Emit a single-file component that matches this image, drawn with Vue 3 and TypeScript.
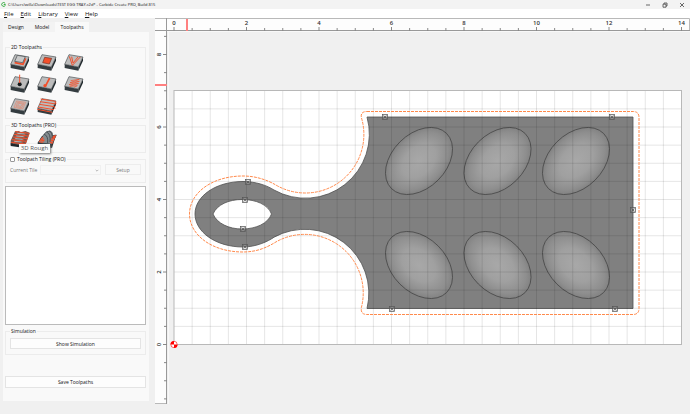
<script setup lang="ts">
import { ref } from 'vue'

const UNIT = 36.25
const ORIGIN_X = 174
const ORIGIN_Y = 344.5

const menus: [string, string][] = [['F', 'ile'], ['E', 'dit'], ['L', 'ibrary'], ['V', 'iew'], ['H', 'elp']]
const tabs = ['Design', 'Model', 'Toolpaths']
const activeTab = ref('Toolpaths')
const tiling = ref(false)

const tools2d = ['Contour', 'Pocket', 'VCarve', 'Drill', 'Engrave', 'Texture', 'Inlay', 'Facing']

const seq = (from: number, to: number) => Array.from({ length: to - from + 1 }, (_, i) => from + i)
const xOf = (halfUnits: number) => ORIGIN_X + (halfUnits * UNIT) / 2
const yOf = (halfUnits: number) => ORIGIN_Y - (halfUnits * UNIT) / 2

const xTicks = seq(0, 28)
const yTicks = seq(-3, 17)
const gridX = seq(1, 27)
const gridY = seq(1, 13)
const xLabels = seq(0, 7).map((n) => n * 2)
const yLabels = seq(0, 4).map((n) => n * 2)

const eggs = [
  { x: 419, y: 161, turn: -45 },
  { x: 497.5, y: 161, turn: -45 },
  { x: 576, y: 161, turn: -45 },
  { x: 419, y: 265, turn: 45 },
  { x: 497.5, y: 265, turn: 45 },
  { x: 576, y: 265, turn: 45 },
]

const tabMarks = [
  [385, 117], [612, 117], [633, 210], [392, 309], [615, 309],
  [248, 182], [245, 200], [243, 229], [245, 247],
]
</script>

<template>
  <div class="app">
    <header class="titlebar">
      <svg class="logo" viewBox="0 0 12 12" aria-hidden="true">
        <path d="M10 3.2A4.6 4.6 0 1 0 10.4 8V6H6.5" fill="none" stroke="#3fae49" stroke-width="2.4" />
      </svg>
      <span class="title">C:\Users\willa\Downloads\TEST EGG TRAY.c2d* - Carbide Create PRO, Build 815</span>
      <div class="controls">
        <button type="button" aria-label="Minimize">
          <svg viewBox="0 0 6 6"><path d="M1 3H5" /></svg>
        </button>
        <button type="button" aria-label="Restore">
          <svg viewBox="0 0 6 6"><path d="M1 2.2H4V5.2H1ZM2 2V1H5V4H4" /></svg>
        </button>
        <button type="button" aria-label="Close">
          <svg viewBox="0 0 6 6"><path d="M1 1L5 5M5 1L1 5" /></svg>
        </button>
      </div>
    </header>

    <nav class="menubar">
      <button v-for="m in menus" :key="m[0]" type="button"><u>{{ m[0] }}</u>{{ m[1] }}</button>
    </nav>

    <main class="body">
      <aside class="side">
        <div class="tabs" role="tablist">
          <button
            v-for="t in tabs"
            :key="t"
            type="button"
            role="tab"
            :class="{ active: t === activeTab }"
            :aria-selected="t === activeTab"
            @click="activeTab = t"
          >{{ t }}</button>
        </div>

        <div class="pane">
          <fieldset class="group flat">
            <legend>2D Toolpaths</legend>
            <div class="tools">
              <button v-for="name in tools2d" :key="name" type="button" :aria-label="name">
                <svg viewBox="0 0 60 54">
                  <path d="M2 31L43 39V50L2 42Z" fill="#343c40" />
                  <path d="M43 39L57 9V20L43 50Z" fill="#20282c" />
                  <path d="M15 2L57 9L43 39L2 31Z" fill="#bcbcbc" stroke="#454b4e" stroke-width="2" />
                  <g v-if="name === 'Contour'">
                    <path d="M14 26L39 31L47 13" fill="none" stroke="#f2502c" stroke-width="5" />
                    <path d="M22 4L46 8L38 26L14 22Z" fill="#c9c9c9" stroke="#40474a" stroke-width="2" />
                  </g>
                  <path v-else-if="name === 'Pocket'" d="M23 10L44 13L37 30L17 26Z" fill="#f2502c" stroke="#6b3328" stroke-width="2" />
                  <path v-else-if="name === 'VCarve'" d="M16 7L25 34L49 9M23 8L27 27L42 9" fill="none" stroke="#f2502c" stroke-width="3" />
                  <g v-else-if="name === 'Drill'">
                    <circle cx="29" cy="25" r="6" fill="#15191b" />
                    <path d="M29 -4V21" stroke="#f2502c" stroke-width="3" />
                  </g>
                  <g v-else-if="name === 'Engrave'">
                    <path d="M38 6L26 29" stroke="#f2502c" stroke-width="5" />
                    <circle cx="24" cy="29" r="5" fill="#f2502c" />
                  </g>
                  <path
                    v-else-if="name === 'Texture'"
                    d="M20 14L46 10L18 20L46 16L15 26L44 22L17 31L40 29L30 34"
                    fill="none" stroke="#f2502c" stroke-width="2"
                  />
                  <path
                    v-else-if="name === 'Inlay'"
                    d="M20 9L47 13L38 33L12 28ZM23 13L42 16L35 29L18 26ZM26 16L38 18L33 25L23 23Z"
                    fill="none" stroke="#e4866e" stroke-width="2"
                  />
                  <path
                    v-else
                    d="M11 3L55 10M55 10L57 17M9 11L57 18M7 19L52 26M52 26L54 32M3 27L51 35M1 34L46 43"
                    fill="none" stroke="#f2502c" stroke-width="3"
                  />
                </svg>
              </button>
            </div>
          </fieldset>

          <fieldset class="group solid">
            <legend>3D Toolpaths (PRO)</legend>
            <div class="tools">
              <button type="button" aria-label="3D Rough" aria-describedby="tip">
                <svg viewBox="0 0 60 54">
                  <path d="M2 32L15 4L27 3L31 7L46 3L59 8L45 50L2 44Z" fill="#6e5a56" />
                  <path d="M2 40L45 48V54L2 48Z" fill="#20282c" />
                  <path d="M15 5L58 10M12 13L55 18M9 21L52 26M6 29L49 34M3 37L46 42" stroke="#f2502c" stroke-width="3" />
                  <path d="M23 3L11 40M47 7L35 44M58 10L46 42" stroke="#f2502c" stroke-width="2" />
                  <path d="M22 10L44 12M19 18L41 20M16 26L38 28M13 34L35 36" stroke="#b5b5b5" stroke-width="3" />
                </svg>
              </button>
              <button type="button" aria-label="3D Finish">
                <svg viewBox="0 0 60 54">
                  <path d="M2 38L15 18L57 16L45 54L2 46Z" fill="#2c3337" />
                  <path d="M4 38L20 14Q28 1 40 3Q48 7 46 17L58 15L44 43Z" fill="#858c90" stroke="#353d41" stroke-width="2" />
                  <path d="M5 35L16 20L24 31L16 39ZM46 18L58 15L46 42L38 38Z" fill="#f2502c" />
                  <path d="M21 13Q34 16 32 40M28 6Q42 10 39 36M37 3Q48 9 45 25" fill="none" stroke="#4a5256" stroke-width="3" />
                  <path d="M8 32L20 36M13 25L24 31M43 27L51 29M41 34L48 36" stroke="#8d8d8d" stroke-width="2" />
                </svg>
              </button>
            </div>
            <div id="tip" class="tip" role="tooltip">3D Rough</div>
          </fieldset>

          <fieldset class="group tiling">
            <legend>
              <label><input v-model="tiling" type="checkbox" />Toolpath Tiling (PRO)</label>
            </legend>
            <div class="tile-row">
              <label for="tile">Current Tile</label>
              <span class="picker">
                <select id="tile" disabled></select>
                <svg viewBox="0 0 6 4" aria-hidden="true"><path d="M1 1L3 3L5 1" /></svg>
              </span>
              <button type="button" class="push" disabled>Setup</button>
            </div>
          </fieldset>

          <ul class="list" aria-label="Toolpath list"></ul>

          <fieldset class="group sim">
            <legend>Simulation</legend>
            <button type="button" class="push">Show Simulation</button>
          </fieldset>

          <button type="button" class="push save">Save Toolpaths</button>
        </div>
      </aside>

      <section class="workspace">
        <svg viewBox="155 18 535 386" role="img" aria-label="Design canvas">
          <defs>
            <radialGradient id="dish">
              <stop offset="0" stop-color="#a8a8a8" />
              <stop offset="0.5" stop-color="#a0a0a0" />
              <stop offset="0.85" stop-color="#8e8e8e" />
              <stop offset="1" stop-color="#828282" />
            </radialGradient>
          </defs>

          <!-- Rulers -->
          <rect x="155" y="18" width="535" height="13" fill="#fdfdfd" />
          <rect x="155" y="18" width="12" height="386" fill="#fdfdfd" />
          <g fill="none" stroke="#b9b9b9">
            <path d="M155 18.5H689.5V30M154.5 18V403.5H167" />
            <path d="M155 30.5H690M166.5 18V404" stroke="#999" />
          </g>
          <path d="M167 31.5H690M168.5 31V404" fill="none" stroke="#f8f8f8" />
          <g stroke="#888">
            <line v-for="t in xTicks" :key="'x' + t" :x1="xOf(t)" :x2="xOf(t)" :y1="t % 4 ? 28 : 27" y2="31" />
            <line v-for="t in yTicks" :key="'y' + t" :y1="yOf(t)" :y2="yOf(t)" :x1="t % 4 ? 164 : 163" x2="167" />
          </g>
          <g class="ruler-text">
            <text v-for="n in xLabels" :key="'lx' + n" :x="xOf(n * 2)" y="25">{{ n }}</text>
            <text
              v-for="n in yLabels"
              :key="'ly' + n"
              :transform="`translate(161 ${yOf(n * 2)}) rotate(-90)`"
            >{{ n }}</text>
          </g>
          <rect x="186" y="19" width="2" height="12" fill="#ff8080" />
          <rect x="155" y="84" width="12" height="2" fill="#ff8080" />

          <!-- Stock -->
          <rect x="174" y="90.5" width="507.5" height="254" fill="#fff" />

          <!-- Tray body with handle -->
          <path
            d="M367 117H633V308.5H367A64 64 0 0 0 274 237.2C268 241.5 256 247 243 247C216 247 195 232 195 214C195 196 216 181.5 243 181.5C256 181.5 267 185.5 274 190A64 64 0 0 0 367 117Z"
            fill="#808080" stroke="#505050" stroke-width="0.8"
          />
          <path
            d="M213 214C217 204.5 229 199.5 242 199.5C256 199.5 268 204.5 271.5 214C268 223.5 256 229 242 229C229 229 217 223.5 213 214Z"
            fill="#fff" stroke="#505050" stroke-width="0.8"
          />
          <ellipse
            v-for="e in eggs"
            :key="`${e.x}-${e.y}`"
            rx="39"
            ry="27"
            :transform="`translate(${e.x} ${e.y}) rotate(${e.turn})`"
            fill="url(#dish)"
            stroke="#484848"
            stroke-width="0.8"
          />

          <g stroke="#000" stroke-opacity="0.1">
            <line v-for="g in gridX" :key="'gx' + g" :x1="xOf(g)" :x2="xOf(g)" y1="91" y2="344" />
            <line v-for="g in gridY" :key="'gy' + g" x1="174" x2="681" :y1="yOf(g)" :y2="yOf(g)" />
          </g>
          <rect x="174" y="90.5" width="507.5" height="254" fill="none" stroke="#b8b8b8" />

          <!-- Contour toolpath -->
          <path
            d="M367 111.5H633Q639 111.5 639 117.5V308.5Q639 314.5 633 314.5H367Q360 314.5 361.5 307A58.5 58.5 0 0 0 275 242.5C266 248 256 252 243 252C212 252 189.5 235 189.5 214C189.5 193 212 176 243 176C256 176 267 180 275 184.5A58.5 58.5 0 0 0 361.5 118Q360 111.5 367 111.5Z"
            fill="none" stroke="#ff8a4c" stroke-dasharray="3 1"
          />

          <g v-for="m in tabMarks" :key="m.join()" :transform="`translate(${m[0]} ${m[1]})`">
            <rect x="-2.5" y="-2.5" width="5" height="5" fill="#aaa" fill-opacity="0.3" stroke="#555" stroke-width="0.7" />
            <path d="M-1.5 -1.5L1.5 1.5M1.5 -1.5L-1.5 1.5" stroke="#444" stroke-width="0.6" />
          </g>

          <!-- Origin -->
          <circle cx="174" cy="344.5" r="3.5" fill="#fff" />
          <path d="M174 344.5V341A3.5 3.5 0 0 0 170.5 344.5ZM174 344.5V348A3.5 3.5 0 0 0 177.5 344.5Z" fill="red" />
          <circle cx="174" cy="344.5" r="3.2" fill="none" stroke="red" stroke-width="0.6" />
        </svg>
      </section>
    </main>
  </div>
</template>

<style>
body {
  background: #f0f0f0;
}
</style>

<style scoped>
.app {
  display: flex;
  flex-direction: column;
  min-height: 100vh;
  font: 5px/8px "Open Sans", "Noto Sans", sans-serif;
  color: #111;
}
button, select, input {
  margin: 0;
  padding: 0;
  border: 0;
  background: none;
  font: inherit;
  color: inherit;
}
button svg {
  display: block;
}
.titlebar {
  display: flex;
  align-items: center;
  height: 9px;
  padding: 0 5px 0 1px;
  background: #f3f3f3;
  color: #111;
}
.logo {
  width: 5px;
  height: 5px;
  margin-right: 2px;
}
.title {
  flex: 1;
  font-size: 4px;
  font-weight: 500;
  white-space: nowrap;
}
.controls {
  display: flex;
  gap: 11px;
}
.controls svg {
  width: 6px;
  height: 6px;
  fill: none;
  stroke: #444;
  stroke-width: 0.8;
}
.menubar {
  display: flex;
  gap: 7px;
  height: 9px;
  padding-left: 4px;
  background: #fff;
  line-height: 10px;
  font-size: 6px;
}
.body {
  flex: 1;
  display: flex;
}
.side {
  flex: none;
  display: flex;
  flex-direction: column;
  box-sizing: border-box;
  width: 155px;
  padding: 4px 6px 13px 3px;
}
.tabs {
  display: flex;
}
.tabs button {
  width: 26px;
  height: 10px;
  background: #f3f3f3;
}
.tabs button.active {
  width: 34px;
  background: #f9f9f9;
}
.pane {
  flex: 1;
  display: flex;
  flex-direction: column;
  padding: 11px 3px 13px 2px;
  background: #f9f9f9;
}
.group {
  position: relative;
  box-sizing: border-box;
  min-width: 0;
  margin: 0;
  padding: 0 4px;
  border: 1px solid #ececec;
}
.group legend {
  padding: 0 1px;
  line-height: 8px;
}
.flat {
  height: 76px;
}
.tools {
  display: grid;
  grid-template-columns: repeat(3, 20px);
  gap: 4px 7px;
  padding-top: 3px;
}
.solid .tools {
  padding-top: 1px;
}
.tools button {
  height: 18px;
}
.tools svg {
  width: 20px;
  height: 18px;
  overflow: visible;
}
.solid {
  height: 32px;
  margin-top: 2px;
}
.tip {
  position: absolute;
  left: 13px;
  top: 15px;
  width: 31px;
  height: 9px;
  background: #fbfbfb;
  box-shadow: 1px 1px 2px #777;
  color: #555;
  font-size: 6px;
  line-height: 9px;
  text-align: center;
}
.tiling {
  height: 28px;
  margin-top: 2px;
}
.tiling legend {
  margin-left: -1px;
}
.tiling label {
  display: flex;
  align-items: center;
  gap: 2px;
}
.tiling input {
  appearance: none;
  box-sizing: border-box;
  width: 5px;
  height: 5px;
  border: 1px solid #999;
  border-radius: 1px;
  background: #fff;
}
.tile-row {
  display: flex;
  align-items: center;
  gap: 4px;
  height: 11px;
  margin-top: 1px;
  color: #777;
}
.tile-row label {
  flex: none;
  width: 26px;
  white-space: nowrap;
}
.picker {
  position: relative;
  flex: 1;
}
.picker select {
  display: block;
  appearance: none;
  box-sizing: border-box;
  width: 100%;
  height: 10px;
  border: 1px solid #ededed;
}
.picker svg {
  position: absolute;
  right: 2px;
  top: 4px;
  width: 4px;
  height: 3px;
  fill: none;
  stroke: #999;
}
.push {
  box-sizing: border-box;
  height: 11px;
  border: 1px solid #e4e4e4;
  background: #fdfdfd;
}
.push:disabled {
  width: 36px;
  background: #f9f9f9;
  border-color: #ededed;
}
.list {
  flex: 1;
  margin: 3px 0 2px;
  padding: 0;
  border: 1px solid #bbb;
  background: #fff;
}
.sim {
  height: 28px;
}
.sim .push {
  display: block;
  width: 100%;
  margin-top: 3px;
}
.save {
  height: 12px;
  margin-top: 21px;
}
.workspace {
  flex: 1;
  min-width: 0;
}
.workspace svg {
  display: block;
  width: 100%;
}
.ruler-text {
  font-size: 6px;
  font-weight: 600;
  text-anchor: middle;
  fill: #333;
}
</style>
